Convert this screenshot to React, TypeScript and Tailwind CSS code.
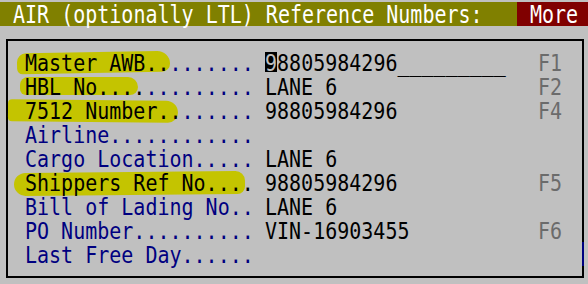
import React from 'react';

type Row = {
  hi?: string;
  label: string;
  value?: string;
  fkey?: string;
  mark?: string;
  cursor?: boolean;
  tail?: string;
};

const rows: Row[] = [
  {
    hi: 'Master AWB..',
    label: '.......',
    value: '98805984296',
    tail: '_________',
    fkey: 'F1',
    cursor: true,
    mark: 'left-[9px] top-[1px] w-[153px] h-[21px] rounded-[10px_14px_9px_6px] -rotate-[1deg]',
  },
  {
    hi: 'HBL No....',
    label: '.........',
    value: 'LANE 6',
    fkey: 'F2',
    mark: 'left-[12px] top-[2px] w-[118px] h-[18px] rounded-[8px_10px_8px_6px]',
  },
  {
    hi: '7512 Number..',
    label: '......',
    value: '98805984296',
    fkey: 'F4',
    mark: 'left-0 top-[1px] w-[170px] h-[22px] rounded-[4px_12px_10px_4px] rotate-[0.5deg]',
  },
  { label: 'Airline............' },
  { label: 'Cargo Location.....', value: 'LANE 6' },
  {
    hi: 'Shippers Ref No....',
    label: '',
    value: '98805984296',
    fkey: 'F5',
    mark: 'left-[6px] top-[1px] w-[231px] h-[23px] rounded-[12px_10px_8px_12px] -rotate-[0.5deg]',
  },
  { label: 'Bill of Lading No..', value: 'LANE 6' },
  { label: 'PO Number..........', value: 'VIN-16903455', fkey: 'F6' },
  { label: 'Last Free Day......' },
];

const App: React.FC = () => {
  return (
    <div className="h-[284px] w-[588px] overflow-hidden bg-[#c0c0c0] pt-[2px] font-['DejaVu_Sans_Mono',monospace] text-[20px]">
      {/* Title bar */}
      <div className="flex h-[24px] items-center text-white">
        <div className="flex h-full flex-1 items-center bg-[#808000] pl-[13px]">
          <span className="inline-block scale-y-[1.23] whitespace-pre leading-[18px]">
            AIR (optionally LTL) Reference Numbers:
          </span>
        </div>
        <div className="flex h-full w-[71px] items-center bg-[#800000] pl-[13px]">
          <span className="inline-block scale-y-[1.23] leading-[18px]">More</span>
        </div>
      </div>

      {/* Reference box */}
      <div className="relative ml-[6px] mt-[13px] h-[239px] w-[578px] border-2 border-black pt-[10px]">
        <div className="absolute right-[-2px] top-[201px] h-[24px] w-[2px] bg-[#000080]" />
        {rows.map((row, i) => (
          <div key={i} className="relative flex h-[24px] items-center pl-[17px]">
            {row.mark && <div className={`absolute bg-[#c4c400] ${row.mark}`} />}
            <span className="relative inline-block w-[240px] scale-y-[1.14] whitespace-pre leading-[20px]">
              {row.hi && <span className="text-black">{row.hi}</span>}
              <span className="text-[#000080]">{row.label}</span>
            </span>
            <div className="relative flex h-full w-[273px] items-center">
              {row.cursor && <div className="absolute left-0 top-[1px] h-[20px] w-[12px] bg-black" />}
              <span className="relative inline-block scale-y-[1.14] whitespace-pre leading-[20px] text-black">
                {row.value && row.cursor ? (
                  <>
                    <span className="text-[#c0c0c0]">{row.value[0]}</span>
                    {row.value.slice(1)}
                    {row.tail}
                  </>
                ) : (
                  row.value
                )}
              </span>
            </div>
            {row.fkey && (
              <span className="inline-block scale-y-[1.14] leading-[20px] text-[#6b6b6b]">{row.fkey}</span>
            )}
          </div>
        ))}
      </div>
    </div>
  );
};

export default App;
